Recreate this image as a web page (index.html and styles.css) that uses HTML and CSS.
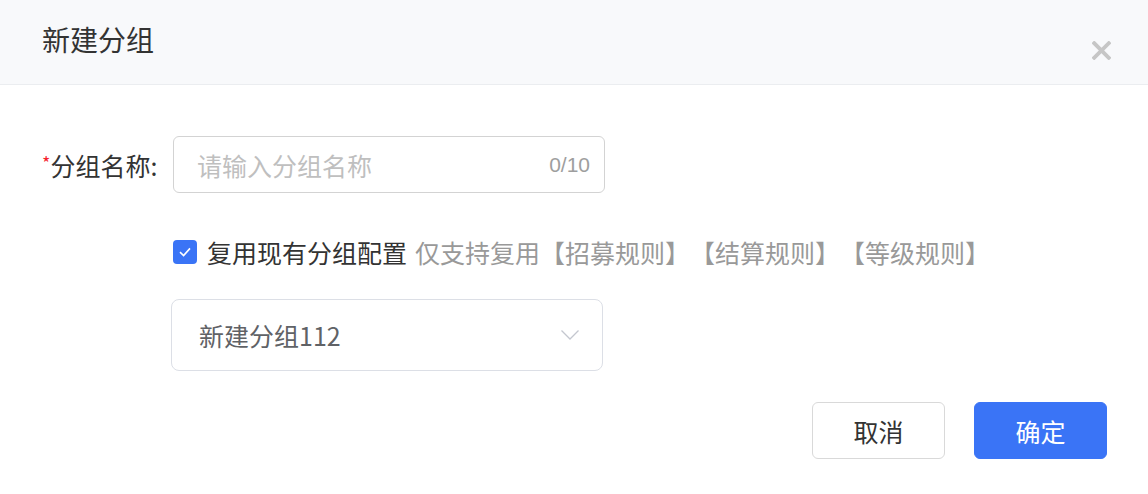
FILE: index.html
```html
<!DOCTYPE html>
<html lang="zh-CN">
<head>
    <meta charset="UTF-8">
    <meta name="viewport" content="width=device-width, initial-scale=1.0">
    <title>新建分组</title>
    <link rel="stylesheet" href="styles.css">
</head>
<body>
    <div class="dialog">
        <!-- Header -->
        <header class="dialog-header">
            <h1>新建分组</h1>
            <span class="close-btn">
                <svg width="19" height="19" viewBox="0 0 19 19">
                    <path d="M2.2 2.2 L16.8 16.8 M16.8 2.2 L2.2 16.8" stroke="#c6c6c6" stroke-width="3.8" stroke-linecap="square"/>
                </svg>
            </span>
        </header>

        <!-- Form -->
        <section class="dialog-body">
            <div class="form-row">
                <label class="form-label"><span class="required">*</span>分组名称:</label>
                <div class="input-box">
                    <span class="placeholder">请输入分组名称</span>
                    <span class="counter">0/10</span>
                </div>
            </div>

            <div class="check-row">
                <span class="checkbox">
                    <svg width="16" height="16" viewBox="0 0 16 16">
                        <path d="M3 8.2 L6.6 11.6 L13 4.4" fill="none" stroke="#fff" stroke-width="1.6"/>
                    </svg>
                </span>
                <span class="check-label">复用现有分组配置</span>
                <span class="check-tip">仅支持复用【招募规则】【结算规则】【等级规则】</span>
            </div>

            <div class="select-box">
                <span class="select-value">新建分组112</span>
                <svg width="20" height="12" viewBox="0 0 20 12">
                    <path d="M1.5 1.5 L10 10 L18.5 1.5" fill="none" stroke="#c4c7cf" stroke-width="1.3"/>
                </svg>
            </div>
        </section>

        <!-- Footer -->
        <footer class="dialog-footer">
            <button class="btn btn-default">取消</button>
            <button class="btn btn-primary">确定</button>
        </footer>
    </div>
</body>
</html>
```

FILE: styles.css
```css
/* Global Styling */
body {
    margin: 0;
    font-family: "Noto Sans CJK SC", "Noto Sans", sans-serif;
    background-color: #fff;
    color: #333;
    text-spacing-trim: space-all;
}
.dialog {
    width: 1148px;
    height: 494px;
    background-color: #fff;
}

/* Header */
.dialog-header {
    height: 84px;
    background-color: #f8f9fb;
    border-bottom: 1px solid #ebedf0;
    display: flex;
    align-items: center;
    justify-content: space-between;
    padding: 0 37px 0 42px;
}
.dialog-header h1 {
    margin: 0 0 6px 0;
    font-size: 28px;
    font-weight: normal;
    color: #333;
}
.close-btn {
    display: flex;
    margin-top: 16px;
}

/* Form */
.dialog-body {
    padding: 51px 0 0 42px;
}
.form-row {
    display: flex;
    align-items: center;
}
.form-label {
    width: 121px;
    margin-right: 10px;
    font-size: 25px;
    color: #333;
    white-space: nowrap;
}
.required {
    color: #f5222d;
    font-size: 18px;
    vertical-align: 6px;
}
.input-box {
    width: 432px;
    height: 57px;
    box-sizing: border-box;
    border: 1px solid #d3d3d3;
    border-radius: 6px;
    display: flex;
    align-items: center;
    justify-content: space-between;
    padding: 0 14px 0 23px;
}
.placeholder {
    font-size: 25px;
    color: #bfbfbf;
}
.counter {
    font-size: 21px;
    color: #9e9e9e;
    font-family: "Liberation Sans", Arial, sans-serif;
}
.check-row {
    display: flex;
    align-items: center;
    margin: 35px 0 0 131px;
    height: 48px;
}
.checkbox {
    width: 24px;
    height: 24px;
    border-radius: 4px;
    background-color: #3a74f6;
    display: flex;
    align-items: center;
    justify-content: center;
    margin-right: 10px;
}
.check-label {
    font-size: 25px;
    color: #333;
    margin-right: 8px;
}
.check-tip {
    font-size: 25px;
    color: #999;
}
.select-box {
    width: 432px;
    height: 72px;
    box-sizing: border-box;
    margin: 23px 0 0 129px;
    border: 1px solid #dcdfe6;
    border-radius: 8px;
    display: flex;
    align-items: center;
    justify-content: space-between;
    padding: 0 22px 0 27px;
}
.select-value {
    font-size: 25px;
    color: #606266;
}

/* Footer */
.dialog-footer {
    display: flex;
    justify-content: flex-end;
    gap: 29px;
    padding: 31px 41px 0 0;
}
.btn {
    width: 133px;
    height: 57px;
    border-radius: 6px;
    font-family: inherit;
    font-size: 25px;
    cursor: pointer;
}
.btn-default {
    background-color: #fff;
    border: 1px solid #d9d9d9;
    color: #333;
}
.btn-primary {
    background-color: #3a74f6;
    border: 1px solid #3a74f6;
    color: #fff;
}
```
